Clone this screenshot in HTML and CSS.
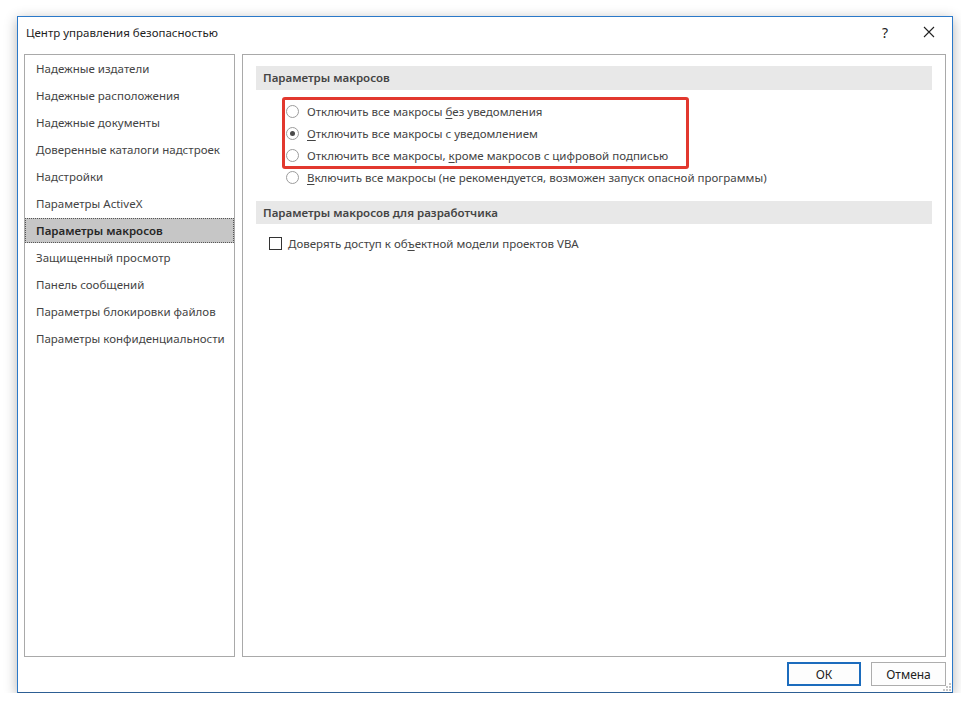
FILE: index.html
```html
<!DOCTYPE html>
<html lang="ru">
<head>
    <meta charset="UTF-8">
    <title>Центр управления безопасностью</title>
    <link rel="stylesheet" href="styles.css">
</head>
<body>
    <div class="window">
        <!-- Заголовок окна -->
        <div class="titlebar">
            <span class="title">Центр управления безопасностью</span>
            <span class="help">?</span>
            <svg class="close" width="12" height="12" viewBox="0 0 12 12">
                <path d="M1 1 L11 11 M11 1 L1 11" stroke="#222" stroke-width="1.1" fill="none"/>
            </svg>
        </div>

        <div class="content">
            <!-- Навигация слева -->
            <ul class="nav">
                <li>Надежные издатели</li>
                <li>Надежные расположения</li>
                <li>Надежные документы</li>
                <li>Доверенные каталоги надстроек</li>
                <li>Надстройки</li>
                <li>Параметры ActiveX</li>
                <li class="active">Параметры макросов</li>
                <li>Защищенный просмотр</li>
                <li>Панель сообщений</li>
                <li>Параметры блокировки файлов</li>
                <li>Параметры конфиденциальности</li>
            </ul>

            <!-- Параметры -->
            <div class="pane">
                <div class="section-head">Параметры макросов</div>
                <div class="options">
                    <div class="highlight"></div>
                    <div class="option"><span class="radio"></span><span>Отключить все макросы <u>б</u>ез уведомления</span></div>
                    <div class="option"><span class="radio checked"></span><span><u>О</u>тключить все макросы с уведомлением</span></div>
                    <div class="option"><span class="radio"></span><span>Отключить все макросы, <u>к</u>роме макросов с цифровой подписью</span></div>
                    <div class="option"><span class="radio"></span><span><u>В</u>ключить все макросы (не рекомендуется, возможен запуск опасной программы)</span></div>
                </div>

                <div class="section-head second">Параметры макросов для разработчика</div>
                <div class="check-row"><span class="checkbox"></span><span>Доверять доступ к об<u>ъ</u>ектной модели проектов VBA</span></div>
            </div>
        </div>

        <div class="buttons">
            <button class="btn default">ОК</button>
            <button class="btn">Отмена</button>
        </div>

        <svg class="grip" width="8" height="8" viewBox="0 0 8 8">
            <rect x="6" y="0" width="2" height="2" fill="#c4c4c4"/>
            <rect x="3" y="3" width="2" height="2" fill="#c4c4c4"/>
            <rect x="6" y="3" width="2" height="2" fill="#c4c4c4"/>
            <rect x="0" y="6" width="2" height="2" fill="#c4c4c4"/>
            <rect x="3" y="6" width="2" height="2" fill="#c4c4c4"/>
            <rect x="6" y="6" width="2" height="2" fill="#c4c4c4"/>
        </svg>
    </div>
</body>
</html>
```

FILE: styles.css
```css
body {
    margin: 0;
    padding: 16px 0 0 17px;
    background: #fff;
    font-family: "Noto Sans", "Open Sans", sans-serif;
    font-size: 11.5px;
    color: #444;
}
.window {
    position: relative;
    box-sizing: border-box;
    width: 936px;
    height: 677px;
    border: 1px solid #2b79c9;
    border-bottom-color: #2d5f94;
    background: #fff;
    box-shadow: 0 3px 12px rgba(0, 0, 0, 0.3);
    display: flex;
    flex-direction: column;
}
.titlebar {
    height: 30px;
    display: flex;
    align-items: center;
    padding-left: 8px;
}
.title {
    flex: 1;
    color: #1e1e1e;
}
.help {
    font-size: 14px;
    color: #222;
    margin-right: 35px;
}
.close {
    margin-right: 17px;
}
.content {
    display: flex;
    gap: 7px;
    margin: 7px 6px 0 6px;
    height: 603px;
}
.nav {
    list-style: none;
    margin: 0;
    padding: 1px 0 0 0;
    width: 211px;
    box-sizing: border-box;
    border: 1px solid #a9a9a9;
}
.nav li {
    height: 25px;
    line-height: 25px;
    margin-bottom: 2px;
    padding-left: 11px;
    white-space: nowrap;
}
.nav li.active {
    background: #c6c6c6;
    outline: 1px dotted #555;
    outline-offset: -1px;
    color: #262626;
    font-weight: 600;
}
.pane {
    flex: 1;
    box-sizing: border-box;
    border: 1px solid #a9a9a9;
    padding: 11px 13px 0 13px;
}
.section-head {
    height: 24px;
    line-height: 24px;
    background: #e8e8e8;
    padding-left: 7px;
    font-weight: 600;
    color: #444;
}
.section-head.second {
    margin-top: 13px;
    height: 23px;
    line-height: 23px;
}
.options {
    position: relative;
    margin-top: 10px;
    padding-left: 30px;
}
.highlight {
    position: absolute;
    left: 26px;
    top: -3px;
    width: 401px;
    height: 66px;
    border: 3px solid #e2382e;
    border-radius: 3px;
}
.option, .check-row {
    height: 22px;
    display: flex;
    align-items: center;
    white-space: nowrap;
}
u {
    text-decoration-thickness: 1px;
    text-underline-offset: 2px;
}
.radio {
    box-sizing: border-box;
    width: 13px;
    height: 13px;
    border: 1px solid #9c9c9c;
    border-radius: 50%;
    margin-right: 8px;
    background: #fff;
    display: flex;
    align-items: center;
    justify-content: center;
}
.radio.checked::after {
    content: "";
    width: 5px;
    height: 5px;
    border-radius: 50%;
    background: #4b4b4b;
}
.check-row {
    margin-top: 8px;
    padding-left: 13px;
}
.checkbox {
    box-sizing: border-box;
    width: 13px;
    height: 13px;
    border: 1px solid #333;
    margin-right: 6px;
    background: #fff;
}
.buttons {
    display: flex;
    justify-content: flex-end;
    gap: 10px;
    margin: 5px 6px 0 0;
}
.btn {
    box-sizing: border-box;
    width: 75px;
    height: 24px;
    font-family: inherit;
    font-size: 12px;
    color: #222;
    background: #fdfdfd;
    border: 1px solid #adadad;
    padding: 0;
}
.btn.default {
    width: 74px;
    border: 2px solid #1c6cbd;
}
.grip {
    position: absolute;
    right: 1px;
    bottom: 1px;
}
```
